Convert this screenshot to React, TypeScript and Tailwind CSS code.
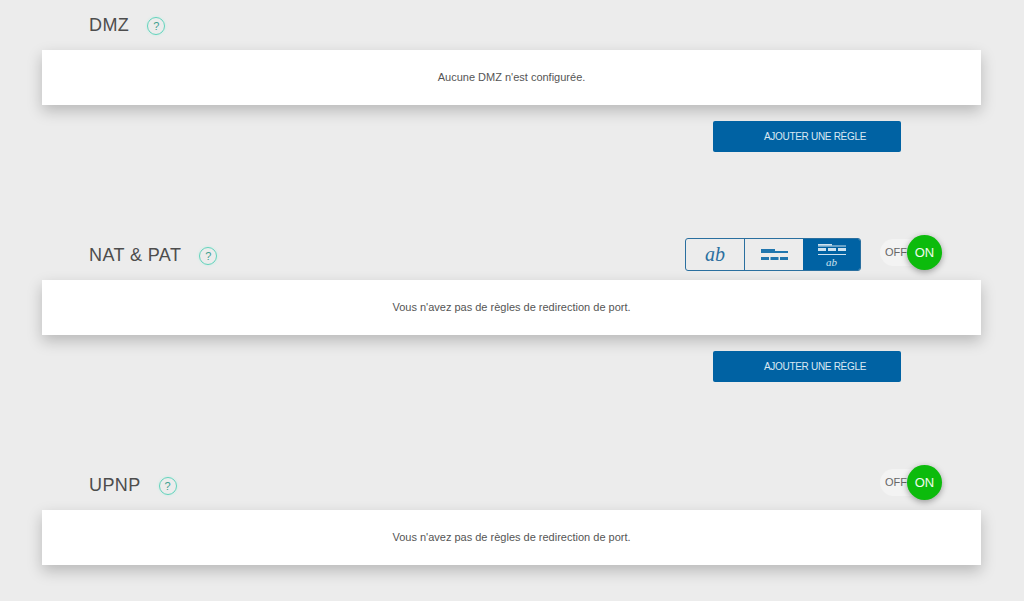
const font = "font-['Liberation_Sans',Arial,sans-serif]";

function Help() {
  return (
    <span className="ml-[18px] mt-[2px] flex h-[18px] w-[18px] items-center justify-center rounded-full border border-[#62d3bc] text-[11px] text-[#3f9f90] shadow-[0_0_3px_#bfeee3]">
      ?
    </span>
  );
}

function Toggle() {
  return (
    <div className="ml-[19px] mt-[5px] flex h-[35px] items-center">
      <span className="flex h-[27px] w-[41px] items-center rounded-l-full bg-[#f3f3f3] pl-[5px] text-[11px] text-[#666]">
        OFF
      </span>
      <span className="z-10 -ml-[14px] flex h-[35px] w-[35px] items-center justify-center rounded-full bg-[#0cbb0c] text-[13px] text-[#f0fbf0] shadow-[0_2px_6px_rgba(0,0,0,0.35)]">
        ON
      </span>
    </div>
  );
}

function ViewSwitch() {
  return (
    <div className="mt-[8px] flex h-[33px] w-[176px] overflow-hidden rounded-[3px] border border-[#2a6f9f]">
      <div className="flex w-[59px] items-center justify-center border-r border-[#2a6f9f] pb-[2px] font-['Liberation_Serif',serif] text-[20px] italic text-[#2a6f9f]">
        ab
      </div>
      <div className="flex w-[58px] items-center justify-center">
        <svg width="27" height="12" viewBox="0 0 27 12" fill="#2176ae">
          <rect x="0" y="0" width="14" height="2" />
          <rect x="0" y="2" width="27" height="2" />
          <rect x="0" y="8" width="8" height="3" />
          <rect x="9.5" y="8" width="8" height="3" />
          <rect x="19" y="8" width="8" height="3" />
        </svg>
      </div>
      <div className="flex flex-1 flex-col items-center bg-[#0062a3] pt-[5px]">
        <svg width="28" height="13" viewBox="0 0 28 13" fill="#cfe3f0">
          <rect x="0" y="0" width="14" height="1.5" />
          <rect x="0" y="1.5" width="28" height="1" />
          <rect x="0" y="4" width="8" height="3" />
          <rect x="10" y="4" width="8" height="3" />
          <rect x="20" y="4" width="8" height="3" />
          <rect x="0" y="10" width="28" height="1" />
        </svg>
        <span className="font-['Liberation_Serif',serif] text-[11px] italic leading-[11px] text-[#cfe3f0]">
          ab
        </span>
      </div>
    </div>
  );
}

function Section({
  title,
  message,
  hasView,
  hasToggle,
  hasButton,
}: {
  title: string;
  message: string;
  hasView?: boolean;
  hasToggle?: boolean;
  hasButton?: boolean;
}) {
  return (
    <section className={hasButton ? "mb-[78px]" : ""}>
      <div className="flex h-[50px] items-center pl-[47px] pr-[39px]">
        <h2 className="text-lg tracking-[0.4px] text-[#4d4d4d]">{title}</h2>
        <Help />
        <div className="ml-auto flex h-full items-start">
          {hasView && <ViewSwitch />}
          {hasToggle && <Toggle />}
        </div>
      </div>
      <div className="flex h-[55px] items-center justify-center bg-white text-[11px] text-[#555] shadow-[0_6px_14px_rgba(0,0,0,0.22)]">
        {message}
      </div>
      {hasButton && (
        <div className="mt-4 flex justify-end pr-[80px]">
          <button className="h-[31px] w-[188px] rounded-[2px] bg-[#0062a3] pl-4 text-[10px] tracking-[-0.3px] text-[#dbe9f3]">
            AJOUTER UNE RÈGLE
          </button>
        </div>
      )}
    </section>
  );
}

export default function App() {
  return (
    <div className={`${font} h-[601px] overflow-hidden bg-[#ececec] pl-[42px] pr-[43px]`}>
      <Section title="DMZ" message="Aucune DMZ n'est configurée." hasButton />
      <Section
        title="NAT & PAT"
        message="Vous n'avez pas de règles de redirection de port."
        hasView
        hasToggle
        hasButton
      />
      <Section
        title="UPNP"
        message="Vous n'avez pas de règles de redirection de port."
        hasToggle
      />
    </div>
  );
}
